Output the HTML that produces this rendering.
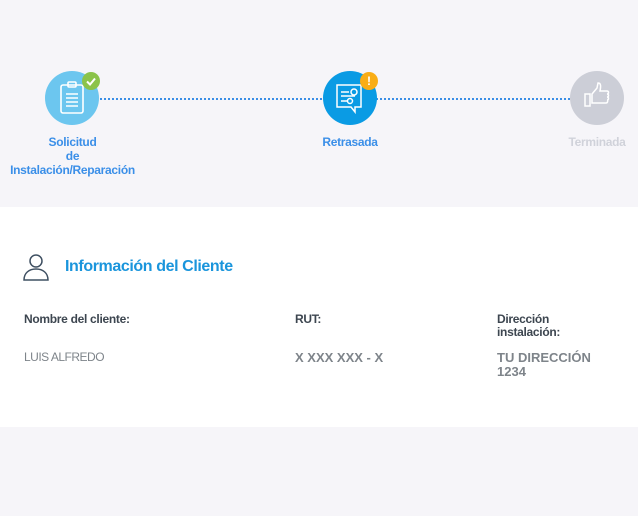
<!DOCTYPE html>
<html><head><meta charset="utf-8"><style>
body{margin:0;width:638px;height:516px;background:#f6f5f9;font-family:"Liberation Sans",sans-serif;position:relative;overflow:hidden}
.a{position:absolute}
.lbl{font-weight:bold;font-size:12px;text-align:center;line-height:14px;letter-spacing:-0.3px}
.panel{position:absolute;left:0;top:207px;width:638px;height:220px;background:#fff}
.h{font-size:12px;font-weight:bold;color:#3d4650;letter-spacing:-0.3px;line-height:13px}
.v{font-size:12px;color:#7e848a;line-height:14px}
</style></head><body>
<div class="a" style="left:100px;top:98px;width:470px;border-top:2px dotted #3a8ee6"></div>
<div class="a" style="left:45px;top:71px;width:54px;height:54px;border-radius:50%;background:#6cc6ef"></div>
<svg class="a" style="left:58px;top:80px" width="30" height="36" viewBox="0 0 30 36" fill="none" stroke="#fff" stroke-width="1.6"><rect x="3" y="5" width="22" height="28" rx="2"/><rect x="10" y="2" width="8" height="5" rx="1"/><path d="M8 14h12M8 18h12M8 22h12M8 26h12"/></svg>
<div class="a" style="left:82px;top:72px;width:18px;height:18px;border-radius:50%;background:#8bc34a"></div>
<svg class="a" style="left:82px;top:72px" width="18" height="18"><path d="M5 9.5l3 3 5-6" stroke="#fff" stroke-width="2" fill="none"/></svg>
<div class="a lbl" style="left:0;top:135px;width:145px;color:#3b8fe8">Solicitud<br>de<br>Instalación/Reparación</div>

<div class="a" style="left:323px;top:71px;width:54px;height:54px;border-radius:50%;background:#0a9be4"></div>
<svg class="a" style="left:334px;top:82px" width="32" height="34" viewBox="0 0 32 34" fill="none" stroke="#fff" stroke-width="1.5"><path d="M3 3h24v22h-6v5l-4-5H3z"/><path d="M7 10h8M7 14h14M7 19h6"/><circle cx="20" cy="10" r="3"/><circle cx="16" cy="19" r="2.5"/></svg>
<div class="a" style="left:360px;top:72px;width:18px;height:18px;border-radius:50%;background:#f9ad16;color:#fff;font-weight:bold;font-size:12px;text-align:center;line-height:18px">!</div>
<div class="a lbl" style="left:300px;top:135px;width:100px;color:#3b8fe8">Retrasada</div>

<div class="a" style="left:570px;top:71px;width:54px;height:54px;border-radius:50%;background:#ccced7"></div>
<svg class="a" style="left:582px;top:82px" width="30" height="30" viewBox="0 0 30 30" fill="none" stroke="#fff" stroke-width="1.5"><rect x="3" y="12" width="5" height="12"/><path d="M10 12l5-6 1-5c3 0 3 3 2 8h7c2 0 2 3 0 3 2 0 2 3 0 3 2 0 2 3 0 3 1 0 1 3-1 3H10z"/></svg>
<div class="a lbl" style="left:557px;top:135px;width:80px;color:#d0d2da">Terminada</div>

<div class="panel"></div>
<svg class="a" style="left:23px;top:253px" width="26" height="28" viewBox="0 0 26 28" fill="none" stroke="#3f5062" stroke-width="1.5"><circle cx="13" cy="8" r="6"/><path d="M1 27c0-7 5-11 12-11s12 4 12 11z"/></svg>
<div class="a" style="left:65px;top:258px;font-size:16px;font-weight:bold;color:#1a95dc;letter-spacing:-0.4px">Información del Cliente</div>
<div class="a h" style="left:24px;top:313px">Nombre del cliente:</div>
<div class="a h" style="left:295px;top:313px">RUT:</div>
<div class="a h" style="left:497px;top:313px">Dirección<br>instalación:</div>
<div class="a v" style="left:24px;top:350px;font-size:12px;letter-spacing:-0.5px">LUIS ALFREDO</div>
<div class="a v" style="left:295px;top:351px;font-weight:bold;font-size:13px">X XXX XXX - X</div>
<div class="a v" style="left:497px;top:351px;font-weight:bold;font-size:13px">TU DIRECCIÓN<br>1234</div>
</body></html>
